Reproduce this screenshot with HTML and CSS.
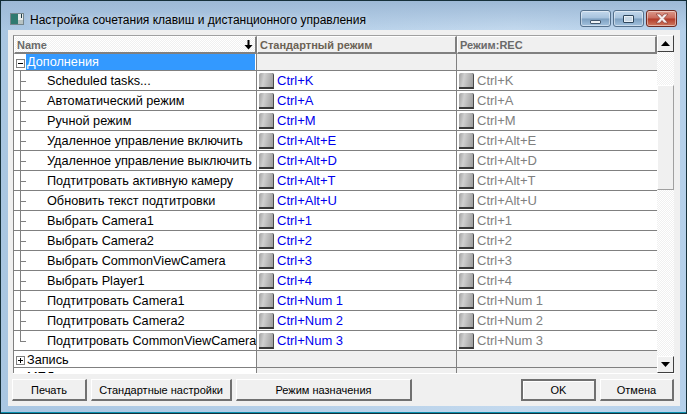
FILE: index.html
```html
<!DOCTYPE html>
<html lang="ru">
<head>
<meta charset="utf-8">
<title>Настройка</title>
<link rel="stylesheet" href="styles.css">
</head>
<body>
<div class="window">
  <div class="titlebar">
    <svg class="app-icon" width="14" height="12" viewBox="0 0 14 12"><rect x="0.5" y="0.500" width="13" height="11" fill="#e6ebea" stroke="#74858c"/><rect x="1" y="1" width="7" height="10" fill="#2f7a70"/><rect x="8" y="7" width="5" height="4" fill="#b8c4c4"/><rect x="11" y="1" width="1" height="4" fill="#1d3c46"/></svg>
    <span class="title">Настройка сочетания клавиш и дистанционного управления</span>
    <div class="caption-btns">
      <div class="cap cap-min"><span class="glyph-min"></span></div>
      <div class="cap cap-max"><span class="glyph-max"></span></div>
      <div class="cap cap-close"><svg width="18" height="11" viewBox="0 0 18 11"><path d="M3 1h4l2 2.500L11 1h4L11 5.500 15 10h-4L9 7.500 7 10H3l4-4.500z" fill="#f4eeee" stroke="#8a3a30" stroke-width="0.7"/></svg></div>
    </div>
  </div>
  <div class="client">
    <div class="grid-wrap">
      <div class="tree">
        <div class="row head">
          <div class="hcell hname"><span>Name</span><svg width="11" height="11" viewBox="0 0 11 11"><path d="M4.500 1h2v5h3L5.500 10.500 1.500 6h3z" fill="#000"/></svg></div>
          <div class="hcell">Стандартный режим</div>
          <div class="hcell">Режим:REC</div>
        </div>
        <div class="body">
          <div class="row group first"><div class="c1"><span class="box minus"></span><span class="sel">Дополнения</span></div><div class="c2 blank"></div><div class="c3 blank"></div></div>
          <div class="row item"><div class="c1"><span class="branch"></span>Scheduled tasks...</div><div class="c2"><span class="key"></span>Ctrl+K</div><div class="c3"><span class="key"></span>Ctrl+K</div></div>
          <div class="row item"><div class="c1"><span class="branch"></span>Автоматический режим</div><div class="c2"><span class="key"></span>Ctrl+A</div><div class="c3"><span class="key"></span>Ctrl+A</div></div>
          <div class="row item"><div class="c1"><span class="branch"></span>Ручной режим</div><div class="c2"><span class="key"></span>Ctrl+M</div><div class="c3"><span class="key"></span>Ctrl+M</div></div>
          <div class="row item"><div class="c1"><span class="branch"></span>Удаленное управление включить</div><div class="c2"><span class="key"></span>Ctrl+Alt+E</div><div class="c3"><span class="key"></span>Ctrl+Alt+E</div></div>
          <div class="row item"><div class="c1"><span class="branch"></span>Удаленное управление выключить</div><div class="c2"><span class="key"></span>Ctrl+Alt+D</div><div class="c3"><span class="key"></span>Ctrl+Alt+D</div></div>
          <div class="row item"><div class="c1"><span class="branch"></span>Подтитровать активную камеру</div><div class="c2"><span class="key"></span>Ctrl+Alt+T</div><div class="c3"><span class="key"></span>Ctrl+Alt+T</div></div>
          <div class="row item"><div class="c1"><span class="branch"></span>Обновить текст подтитровки</div><div class="c2"><span class="key"></span>Ctrl+Alt+U</div><div class="c3"><span class="key"></span>Ctrl+Alt+U</div></div>
          <div class="row item"><div class="c1"><span class="branch"></span>Выбрать Camera1</div><div class="c2"><span class="key"></span>Ctrl+1</div><div class="c3"><span class="key"></span>Ctrl+1</div></div>
          <div class="row item"><div class="c1"><span class="branch"></span>Выбрать Camera2</div><div class="c2"><span class="key"></span>Ctrl+2</div><div class="c3"><span class="key"></span>Ctrl+2</div></div>
          <div class="row item"><div class="c1"><span class="branch"></span>Выбрать CommonViewCamera</div><div class="c2"><span class="key"></span>Ctrl+3</div><div class="c3"><span class="key"></span>Ctrl+3</div></div>
          <div class="row item"><div class="c1"><span class="branch"></span>Выбрать Player1</div><div class="c2"><span class="key"></span>Ctrl+4</div><div class="c3"><span class="key"></span>Ctrl+4</div></div>
          <div class="row item"><div class="c1"><span class="branch"></span>Подтитровать Camera1</div><div class="c2"><span class="key"></span>Ctrl+Num 1</div><div class="c3"><span class="key"></span>Ctrl+Num 1</div></div>
          <div class="row item"><div class="c1"><span class="branch"></span>Подтитровать Camera2</div><div class="c2"><span class="key"></span>Ctrl+Num 2</div><div class="c3"><span class="key"></span>Ctrl+Num 2</div></div>
          <div class="row item"><div class="c1"><span class="branch last"></span>Подтитровать CommonViewCamera</div><div class="c2"><span class="key"></span>Ctrl+Num 3</div><div class="c3"><span class="key"></span>Ctrl+Num 3</div></div>
          <div class="row group"><div class="c1"><span class="box plus"></span>Запись</div><div class="c2 blank"></div><div class="c3 blank"></div></div>
          <div class="row group"><div class="c1"><span class="box plus"></span>МЕД</div><div class="c2 blank"></div><div class="c3 blank"></div></div>
        </div>
      </div>
      <div class="scrollbar">
        <div class="arrow"><svg width="9" height="5" viewBox="0 0 9 5"><path d="M4.500 0L9 5H0z" fill="#000"/></svg></div>
        <div class="track"><div class="thumb"></div></div>
        <div class="arrow"><svg width="9" height="5" viewBox="0 0 9 5"><path d="M0 0h9L4.500 5z" fill="#000"/></svg></div>
      </div>
    </div>
    <div class="buttons">
      <button class="btn w-print">Печать</button>
      <button class="btn w-std">Стандартные настройки</button>
      <button class="btn w-mode">Режим назначения</button>
      <span class="spacer"></span>
      <button class="btn w-ok default">OK</button>
      <button class="btn w-cancel">Отмена</button>
    </div>
  </div>
</div>
</body>
</html>
```
FILE: styles.css
```css
* { box-sizing: border-box; }
html, body { margin: 0; padding: 0; }
body { width: 687px; height: 414px; overflow: hidden; background: #0f2a33; font-family: "Liberation Sans", Arial, sans-serif; font-size: 12px; }
.window {
  width: 687px; height: 414px; display: flex; flex-direction: column;
  padding: 0 6px 7px 7px;
  border: 1px solid #16303a; border-radius: 6px 6px 0 0;
  background: linear-gradient(90deg, #a9c6e2 0, #b5cfe8 40%, #c3d9ee 75%, #b5d0ea 100%);
  box-shadow: inset 0 -1px 0 #0a8fae;
}
.titlebar { height: 29px; display: flex; align-items: center; flex: none; gap: 6px; padding: 6px 6px 0 9px; background: linear-gradient(#9db9d6, rgba(180,205,230,0)); margin: 0 -6px 0 -7px; }
.app-icon { flex: none; }
.title { font-size: 12px; color: #000; white-space: nowrap; margin-top: 2px; text-shadow: 0 0 6px rgba(255,255,255,.7); }
.caption-btns { margin-left: auto; display: flex; gap: 2px; align-self: flex-start; margin-top: 3px; margin-right: 3px; }
.cap { height: 17px; border: 1px solid #54708c; border-radius: 3px; display: flex; align-items: center; justify-content: center; box-shadow: inset 0 0 0 1px rgba(255,255,255,.45); }
.cap-min, .cap-max { width: 31px; background: linear-gradient(#c3d8ec 0, #a6c2dd 48%, #7c9fc0 52%, #a3c2de 100%); }
.cap-close { width: 31px; border-color: #6e2a22; background: linear-gradient(#dc9a8c 0, #c9695a 48%, #b23a28 52%, #cf7a60 100%); }
.glyph-min { width: 11px; height: 4px; margin-top: 6px; background: #eef2f6; border: 1px solid #42586e; border-radius: 1px; }
.glyph-max { width: 11px; height: 8px; background: #c8d8e6; border: 1px solid #2e465c; box-shadow: inset 0 0 0 1px #e8eff5; border-radius: 1px; }
.client { flex: 1; min-height: 0; background: #f0f0f0; display: flex; flex-direction: column; padding: 5px; width: 672px; }
.grid-wrap { height: 339px; display: flex; flex: none; border-bottom: 1px solid #fff; }
.tree { width: 644px; flex: none; overflow: hidden; border-left: 1px solid #808080; border-top: 1px solid #a0a0a0; }
.row { display: flex; }
.head { height: 18px; background: #f0f0f0; }
.hcell { width: 200px; height: 18px; flex: none; padding: 2px 0 0 2px; font-weight: bold; font-size: 11px; color: #6a6a6a; border-right: 2px solid #808080; border-bottom: 2px solid #808080; border-left: 1px solid #fff; border-top: 1px solid #fff; white-space: nowrap; line-height: 13px; }
.hcell.hname { width: 243px; display: flex; justify-content: space-between; padding-right: 1px; background: repeating-conic-gradient(#f0f0f0 0 25%, #fff 0 50%) 0 0 / 2px 2px; }
.hcell:nth-child(2) { color: #6b6255; }
.body { height: 320px; overflow: hidden; }
.item, .group { height: 20px; background: #fff; border-bottom: 1px solid #808080; line-height: 21px; }
.c1 { font-size: 12.7px; }
.c2, .c3 { font-size: 13px; }
.group { height: 17px; line-height: 18px; }
.c1 { width: 243px; flex: none; padding-left: 33px; position: relative; white-space: nowrap; overflow: hidden; color: #000; border-right: 1px solid #808080; }
.group .c1 { padding-left: 13px; }
.c2, .c3 { width: 200px; flex: none; display: flex; align-items: center; padding-left: 2px; border-right: 1px solid #808080; white-space: nowrap; }
.c2 { color: #0000ee; }
.c3 { color: #808080; border-right: 0; }
.blank { background: #f0f0f0; }
.sel { background: #3399ff; color: #fff; display: block; width: 229px; height: 16px; margin-left: -1px; padding-left: 1px; line-height: 17px; }
.box { position: absolute; left: 2px; top: 5px; width: 9px; height: 9px; border: 1px solid #808080; background: #fff; }
.box::before { content: ""; position: absolute; left: 1px; top: 3px; width: 5px; height: 1px; background: #000; }
.box.plus::after { content: ""; position: absolute; left: 3px; top: 1px; width: 1px; height: 5px; background: #000; }
.branch { position: absolute; left: 6px; top: 0; bottom: -1px; width: 1px; background: #808080; }
.branch::after { content: ""; position: absolute; left: 0; top: 10px; width: 6px; height: 1px; background: #808080; }
.branch.last { bottom: 9px; }
.key { width: 15px; height: 16px; margin-right: 3px; flex: none; background: linear-gradient(100deg, #a0a0a0 0, #d0d0d0 35%, #9c9c9c 100%); border-bottom: 2px solid #3a3a3a; border-right: 1px solid #4a4a4a; border-radius: 2px 2px 0 0; }
.scrollbar { width: 17px; flex: none; display: flex; flex-direction: column; background: repeating-conic-gradient(#f0f0f0 0 25%, #fff 0 50%) 0 0 / 2px 2px; }
.arrow { height: 17px; flex: none; background: #f0f0f0; border: 1px solid; border-color: #fff #404040 #404040 #fff; display: flex; align-items: center; justify-content: center; }
.track { flex: 1; padding-top: 33px; }
.thumb { height: 105px; background: #f0f0f0; border: 1px solid; border-color: #fff #a0a0a0 #a0a0a0 #fff; }
.buttons { display: flex; margin: 5px 1px 0 -1px; height: 22px; flex: none; gap: 4px; }
.btn { height: 22px; padding: 0; font: 11px "Liberation Sans", Arial, sans-serif; color: #000; background: #f0f0f0; border-style: solid; border-width: 1px 2px 2px 1px; border-color: #fff #707070 #707070 #fff; flex: none; }
.spacer { flex: 1; margin-right: -4px; }
.w-print { width: 75px; }
.w-std { width: 141px; }
.w-mode { width: 176px; }
.w-ok { width: 75px; }
.w-cancel { width: 74px; }
.default { border: 2px solid #707070; box-shadow: inset 1px 1px 0 #fff; }
```
